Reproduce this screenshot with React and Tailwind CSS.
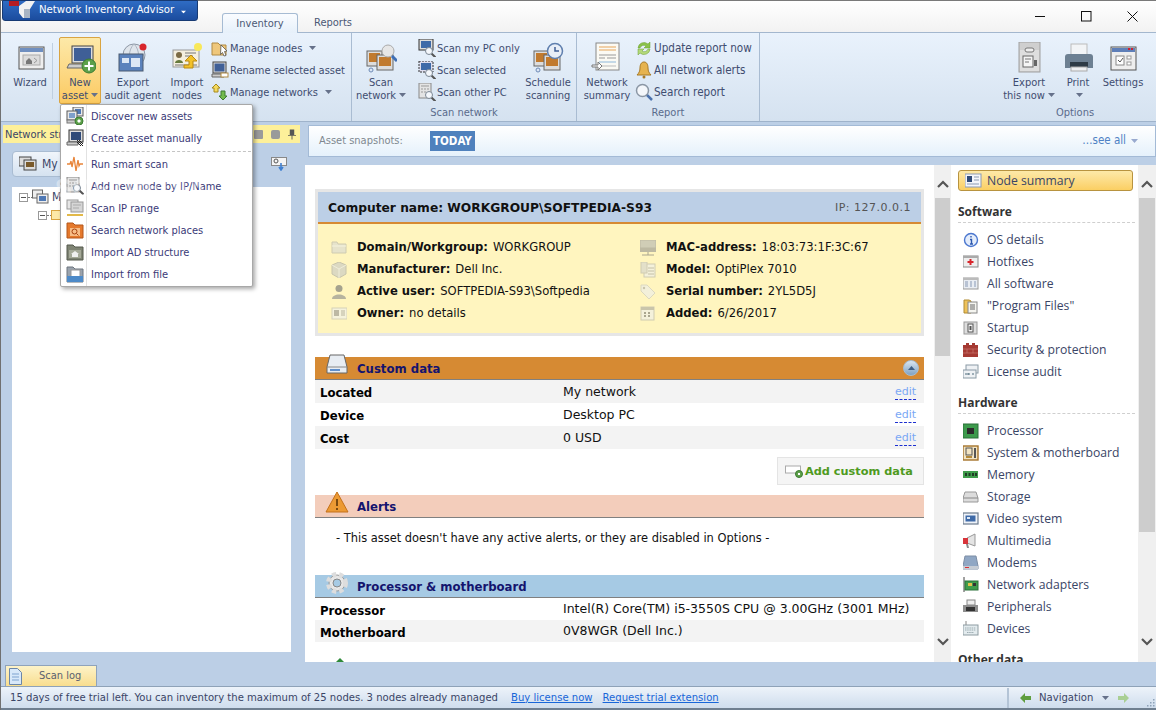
import React from 'react';

const ui = "font-['DejaVu_Sans_Condensed','Liberation_Sans',sans-serif]";
const web = "font-['DejaVu_Sans','Liberation_Sans',sans-serif]";

const Ic = ({ s = 16, children }) => (
    <svg width={s} height={s} viewBox={`0 0 ${s} ${s}`} className="shrink-0">{children}</svg>
);

const Caret = ({ className = '' }) => (
    <svg width="7" height="4" viewBox="0 0 7 4" className={`inline-block ${className}`}><path d="M0 0h7L3.5 4z" fill="#66718a" /></svg>
);

const Plus = ({ x, y, r = 6 }) => (
    <g>
        <circle cx={x} cy={y} r={r} fill="#5da04a" stroke="#3c7c32" />
        <path d={`M${x - r + 2.5} ${y}h${2 * r - 5}M${x} ${y - r + 2.5}v${2 * r - 5}`} stroke="#fff" strokeWidth="2" />
    </g>
);

const Pc = ({ x, y, w = 15, h = 12, fill = '#4f79b5' }) => (
    <g>
        <rect x={x} y={y} width={w} height={h} fill="#e9e9e9" stroke="#5a5a5a" />
        <rect x={x + 2} y={y + 2} width={w - 4} height={h - 4} fill={fill} />
    </g>
);

const Lens = ({ x, y, r = 4 }) => (
    <g>
        <path d={`M${x + r - 1} ${y + r - 1}l4 4`} stroke="#555" strokeWidth="2" />
        <circle cx={x} cy={y} r={r} fill="#f4f7fb" stroke="#7b8794" />
    </g>
);

// big ribbon icons
const big = {
    wizard: <Ic s={32}><rect x="5" y="5" width="25" height="22" fill="#eee" stroke="#555" /><rect x="6" y="6" width="23" height="4" fill="#6f8fc0" /><rect x="9" y="13" width="17" height="10" fill="#dcdcdc" stroke="#aaa" /><path d="M12 19l3-3 3 3v3h-6z" fill="#777" /><path d="M20 16l3 2.5-3 2.5" stroke="#999" fill="none" /></Ic>,
    newAsset: <Ic s={32}><rect x="8" y="4" width="21" height="17" fill="#ddd" stroke="#444" /><rect x="10" y="6" width="17" height="13" fill="#3f5f97" /><path d="M5 22h24l2 4H3z" fill="#ccc" stroke="#666" /><Plus x={25} y={24} r={7} /></Ic>,
    agent: <Ic s={32}><circle cx="17" cy="13" r="11" fill="#dfe5ec" stroke="#8d97a5" /><path d="M6 13h22M17 2c-6 6-6 16 0 22M17 2c6 6 6 16 0 22" stroke="#aab4c0" fill="none" /><rect x="2" y="12" width="24" height="17" fill="#5b82bc" stroke="#4a5a70" /><rect x="5" y="16" width="7" height="5" fill="#dce7f5" /><rect x="14" y="16" width="9" height="9" fill="#dce7f5" /><circle cx="26" cy="5" r="3.5" fill="#d8262c" /></Ic>,
    importN: <Ic s={32}><rect x="2" y="8" width="26" height="17" fill="#f5efdf" stroke="#999" /><circle cx="8" cy="13" r="3" fill="#7c6a44" /><path d="M4 21c0-4 8-4 8 0z" fill="#667a3c" /><path d="M14 11h11M14 14h8M4 23h22" stroke="#777" /><circle cx="27" cy="5" r="4" fill="#f8e85a" /><path d="M20 13l6 6h-4v7h-9v-3h5v-4h-4z" fill="#f3c128" stroke="#b98a13" /></Ic>,
    scan: <Ic s={32}><rect x="2" y="9" width="15" height="15" fill="#ddd" stroke="#666" /><rect x="4" y="11" width="11" height="9" fill="#c17a2e" /><rect x="12" y="13" width="16" height="15" fill="#ddd" stroke="#666" /><rect x="14" y="15" width="12" height="9" fill="#c17a2e" /><circle cx="23" cy="9" r="6" fill="#e6e6e6" stroke="#aaa" /><path d="M27 14l5 5" stroke="#3f6fb5" strokeWidth="3" /><circle cx="6" cy="28" r="2" fill="#dce7f5" stroke="#6d8ab5" /></Ic>,
    sched: <Ic s={32}><rect x="2" y="9" width="15" height="15" fill="#ddd" stroke="#666" /><rect x="4" y="11" width="11" height="9" fill="#c17a2e" /><rect x="12" y="13" width="16" height="15" fill="#ddd" stroke="#666" /><rect x="14" y="15" width="12" height="9" fill="#c17a2e" /><circle cx="23" cy="9" r="7.5" fill="#e8eef7" stroke="#5f7fae" strokeWidth="1.5" /><path d="M23 5v4h4" stroke="#3f5f97" fill="none" strokeWidth="1.5" /><circle cx="6" cy="28" r="2" fill="#dce7f5" stroke="#6d8ab5" /></Ic>,
    summary: <Ic s={32}><rect x="5" y="1" width="23" height="27" fill="#fbfaf4" stroke="#888" /><path d="M8 5h17M8 8h17" stroke="#e6a55b" /><path d="M8 13h17M8 16h6M16 16h9" stroke="#999" /><path d="M8 20h17" stroke="#8fb8da" /><path d="M8 24h17" stroke="#bbb" /><path d="M1 23h6v-3l4 4-4 4v-3H1z" fill="#fff" stroke="#777" /></Ic>,
    exportNow: <Ic s={32}><rect x="6" y="0" width="21" height="30" fill="#cfcfcf" stroke="#a0a0a0" /><rect x="7" y="8" width="19" height="21" fill="#dedede" /><rect x="12" y="6" width="9" height="4" rx="2" fill="#eee" stroke="#777" /><rect x="10" y="14" width="10" height="11" fill="#f5f5f5" stroke="#666" /><path d="M12 17h6M12 20h4" stroke="#777" /><rect x="21" y="18" width="3" height="6" fill="#666" /></Ic>,
    print: <Ic s={32}><rect x="9" y="2" width="16" height="11" fill="#f2f4f6" stroke="#bbb" /><path d="M3 15c0-2 1-3 3-3h22c2 0 3 1 3 3v11H3z" fill="#6d8092" /><rect x="8" y="20" width="18" height="5" fill="#2e3b46" /><rect x="9" y="25" width="16" height="4" fill="#eef0f2" stroke="#aaa" /></Ic>,
    settings: <Ic s={32}><rect x="4" y="5" width="25" height="23" fill="#eee" stroke="#555" /><rect x="5" y="6" width="23" height="4" fill="#5f7fb8" /><path d="M21 7h2M24 7h2" stroke="#c23" strokeWidth="2" /><rect x="9" y="14" width="8" height="9" fill="#fff" stroke="#888" /><path d="M11 18l2 2 3-4" stroke="#555" fill="none" /><rect x="20" y="14" width="4" height="3" fill="#fff" stroke="#999" /><rect x="20" y="20" width="4" height="3" fill="#fff" stroke="#999" /></Ic>,
};

// small ribbon icons
const small = {
    folder: <Ic s={18}><path d="M1 4h6l2 2h6v10H1z" fill="#efc77b" stroke="#b08a45" /><path d="M10 6l6 6-2.5.5 1.5 4-2 .5-1.5-3.5-2 2z" fill="#fff" stroke="#444" strokeWidth=".7" /></Ic>,
    rename: <Ic s={18}><rect x="2" y="1" width="13" height="11" fill="#ddd" stroke="#444" /><rect x="3.5" y="2.5" width="10" height="8" fill="#3f5f97" /><path d="M1 13h12v3H1z" fill="#ccc" stroke="#666" /><rect x="10" y="12" width="7" height="4" fill="#fff" stroke="#b08a45" /></Ic>,
    nets: <Ic s={18}><path d="M5 1l4 4H7v4H3V5H1z" fill="#f4d95e" stroke="#a68a1f" /><path d="M12 17l4-4h-2V8h-4v5H8z" fill="#72bb4e" stroke="#3c7c32" /></Ic>,
    myPc: <Ic s={18}><rect x="1" y="0" width="14" height="11" fill="#ddd" stroke="#333" /><rect x="3" y="2" width="10" height="7" fill="#3e6aa8" /><Lens x={11} y={12} r={3.5} /></Ic>,
    sel: <Ic s={18}><rect x="1" y="0" width="14" height="11" fill="#dde" stroke="#333" strokeDasharray="2 1" /><rect x="3" y="2" width="10" height="7" fill="#3e6aa8" /><Lens x={11} y={12} r={3.5} /></Ic>,
    other: <Ic s={18}><rect x="1" y="0" width="12" height="15" fill="#e4e4e4" stroke="#888" /><path d="M3 3h8M3 6h2M6 6h2M9 6h2M3 9h2M6 9h2" stroke="#999" /><Lens x={11} y={12} r={3.5} /></Ic>,
    update: <Ic s={18}><path d="M3 9a6 6 0 0 1 10-4l2-2v6h-6l2-2a4 4 0 0 0-6 2z" fill="#8bc34a" stroke="#6a9c30" strokeWidth=".5" /><path d="M15 10a6 6 0 0 1-10 4l-2 2v-6h6l-2 2a4 4 0 0 0 6-2z" fill="#b4d97a" stroke="#6a9c30" strokeWidth=".5" /></Ic>,
    bell: <Ic s={18}><path d="M9 1c3 0 4 3 4 6s1 5 3 7H2c2-2 3-4 3-7s1-6 4-6z" fill="#e6b34f" stroke="#a87a26" /><circle cx="9" cy="16" r="1.5" fill="#a87a26" /></Ic>,
    find: <Ic s={18}><path d="M11 11l6 6" stroke="#4c72ad" strokeWidth="2.5" /><circle cx="7.5" cy="7.5" r="6" fill="#f4f7fb" stroke="#8b97a5" strokeWidth="1.5" /></Ic>,
};

// context menu icons
const menuIc = {
    discover: <Ic s={18}><Pc x={7} y={0} w={10} h={9} /><Pc x={1} y={4} w={10} h={9} fill="#7fa0cc" /><rect x="1" y="13" width="10" height="3" fill="#ccc" stroke="#777" /><Plus x={13} y={14} r={4} /></Ic>,
    create: <Ic s={18}><rect x="3" y="1" width="14" height="12" fill="#ddd" stroke="#333" /><rect x="5" y="3" width="10" height="8" fill="#2f4a78" /><path d="M1 13h11v3H1z" fill="#ccc" stroke="#666" /><path d="M11 11l6 6M13 11l4 4M11 13l4 4" stroke="#222" /></Ic>,
    smart: <Ic s={18}><path d="M1 9h3l1-3 1 6 2-10 2 14 2-11 1 6 1-2h3" stroke="#e8853a" fill="none" strokeWidth="1.3" /></Ic>,
    add: <Ic s={18}><rect x="1" y="0" width="12" height="15" fill="#e4e4e4" stroke="#888" /><path d="M3 3h8M3 6h2M6 6h2M9 6h2M3 9h2M6 9h2" stroke="#999" /><Lens x={11} y={11} r={3.5} /></Ic>,
    range: <Ic s={18}><rect x="1" y="1" width="11" height="9" fill="#e6e6e6" stroke="#999" /><rect x="5" y="3" width="12" height="10" fill="#d6d6d6" stroke="#999" /><path d="M7 6h8M7 9h6" stroke="#aaa" /><path d="M1 16h16" stroke="#e2b94a" strokeWidth="2" /></Ic>,
    places: <Ic s={18}><path d="M1 2h6l2 2h8v13H1z" fill="#e5792c" stroke="#b3561a" /><rect x="4" y="7" width="10" height="8" fill="#f7bd86" /><circle cx="8.5" cy="10.5" r="2.5" fill="none" stroke="#a8420f" /><path d="M10.5 12.5l2 2" stroke="#a8420f" /></Ic>,
    ad: <Ic s={18}><path d="M1 2h6l2 2h8v13H1z" fill="#7f8474" stroke="#55594c" /><path d="M3 7h12v8H3z" fill="#a5a998" /><path d="M9 8l4 3h-1v3H6v-3H5z" fill="#f0f0f0" /></Ic>,
    file: <Ic s={18}><path d="M1 2h6l2 2h8v13H1z" fill="#9aa3ad" stroke="#6c757e" /><rect x="5" y="5" width="9" height="7" fill="#fff" stroke="#999" /><path d="M1 11h16v6H1z" fill="#4d8ac8" /></Ic>,
};

// grey icons in the summary card
const info = {
    folder: <Ic><path d="M1 2h5l1 2h8v9H1z" fill="#e6e3cb" stroke="#cfcbb0" /><path d="M1 6h14" stroke="#f5f3de" /></Ic>,
    box: <Ic><path d="M8 0l7 3v9l-7 4-7-4V3z" fill="#dcd9c2" stroke="#c8c4ab" /><path d="M1 3l7 4 7-4M8 7v9" stroke="#efedd9" fill="none" /></Ic>,
    user: <Ic><circle cx="8" cy="4.5" r="3.5" fill="#a5a28e" /><path d="M1 15c0-6 14-6 14 0z" fill="#b6b39e" /></Ic>,
    card: <Ic><rect x="1" y="2" width="15" height="11" fill="#f5f2dc" stroke="#d6d2b8" /><rect x="3" y="4" width="5" height="6" fill="#bdb9a4" /><path d="M10 5h4M10 7h4M10 9h4" stroke="#b8b49e" /></Ic>,
    mac: <Ic><rect x="0" y="0" width="16" height="8" fill="#d0cdb6" stroke="#bdb9a2" /><rect x="0" y="8" width="16" height="4" fill="#bdb9a2" /><path d="M8 12v3M2 15h12" stroke="#aaa68f" /></Ic>,
    model: <Ic><rect x="4" y="2" width="11" height="13" fill="#f4f1db" stroke="#d0ccb2" /><rect x="1" y="0" width="6" height="11" fill="#e3e0c9" stroke="#d0ccb2" /><path d="M8 6h6M8 9h6M8 12h6" stroke="#c4c0a6" /></Ic>,
    tag: <Ic><path d="M1 1h6l8 8-6 6-8-8z" fill="#f3f0da" stroke="#dcd8bf" /><circle cx="4" cy="4" r="1.2" fill="#c8c4ab" /></Ic>,
    cal: <Ic><rect x="1" y="1" width="13" height="13" fill="#f4f1db" stroke="#cfcbb1" /><rect x="1" y="1" width="13" height="3" fill="#c9c5ab" /><path d="M4 7h2M8 7h2M4 10h2M8 10h2" stroke="#aaa68f" strokeWidth="2" /></Ic>,
};

const nav = {
    summary: <Ic s={18}><rect x="0" y="2" width="16" height="13" fill="#f4f6fb" stroke="#8b9ab3" /><rect x="2" y="4" width="5" height="6" fill="#2f4a78" /><path d="M9 5h5M9 8h5M2 12h12" stroke="#8b9ab3" /></Ic>,
    os: <Ic><circle cx="8" cy="8" r="6.5" fill="#e4edfb" stroke="#4b77cf" strokeWidth="1.4" /><path d="M8 4v1.5M7 7.5h1.5V12M7 12h3" stroke="#2e59ae" strokeWidth="1.4" fill="none" /></Ic>,
    hot: <Ic><rect x="0" y="2" width="15" height="11" fill="#eee" stroke="#888" /><rect x="0" y="2" width="15" height="2" fill="#aaa" /><path d="M7.5 5v6M4.5 8h6" stroke="#d8262c" strokeWidth="2" /></Ic>,
    soft: <Ic><rect x="0" y="2" width="15" height="11" fill="#e9edf3" stroke="#999" /><rect x="0" y="2" width="15" height="2" fill="#bbb" /><path d="M2 6h3M2 8h3M2 10h3M7 6h2M7 8h2M7 10h2M11 6h2M11 8h2M11 10h2" stroke="#8899b5" /></Ic>,
    prog: <Ic><path d="M1 2h5l2 1v12H1z" fill="#eec25a" stroke="#b08a30" /><rect x="5" y="4" width="9" height="11" fill="#f5f5f0" stroke="#888" /><path d="M7 7h5M7 9h5M7 11h5" stroke="#666" /></Ic>,
    startup: <Ic><rect x="1" y="2" width="13" height="12" fill="#ddd" stroke="#999" /><rect x="5" y="4" width="5" height="8" fill="#f4f4f4" stroke="#555" /><rect x="6.5" y="6" width="2" height="4" fill="#555" /></Ic>,
    sec: <Ic><path d="M0 3h3V1h3v2h3V1h3v2h3v12H0z" fill="#a53a33" /><path d="M0 7h15M0 11h15M4 7v4M10 7v4" stroke="#c9776f" strokeWidth=".7" /></Ic>,
    lic: <Ic><rect x="3" y="1" width="12" height="8" fill="#eef1f4" stroke="#8a9aa5" /><rect x="0" y="6" width="13" height="8" fill="#eef1f4" stroke="#8a9aa5" /><path d="M2 10h4M6 9v2M9 10h2" stroke="#4d6b7a" /></Ic>,
    cpu: <Ic><rect x="0" y="1" width="15" height="14" fill="#3d9a4c" stroke="#2a7038" /><rect x="4" y="5" width="7" height="6" fill="#2b2b2b" /></Ic>,
    board: <Ic><rect x="0" y="1" width="15" height="14" fill="#f2e4c3" stroke="#a5742c" strokeWidth="1.4" /><rect x="3" y="3" width="6" height="7" fill="none" stroke="#555" /><rect x="11" y="3" width="2" height="10" fill="#555" /><path d="M3 12h6" stroke="#b48a3a" strokeWidth="2" /></Ic>,
    mem: <Ic><rect x="0" y="4" width="15" height="7" fill="#3f9c4b" /><path d="M2 6h2v3H2zM5.5 6h2v3h-2zM9 6h2v3H9zM12 6h2v3h-2z" fill="#1f3d25" /></Ic>,
    store: <Ic><path d="M2 3h11l2 6v4H0V9z" fill="#dcdcdc" stroke="#999" /><path d="M0 9h15" stroke="#888" /></Ic>,
    video: <Ic><rect x="0" y="2" width="15" height="11" fill="#eef2f8" stroke="#6b7b8e" strokeWidth="1.2" /><rect x="2.5" y="4.5" width="10" height="6" fill="#3e6aa8" /><rect x="4" y="6" width="3" height="2" fill="#dce7f5" /></Ic>,
    multi: <Ic><path d="M4 5l8-4v12l-8-3z" fill="#e4e4e4" stroke="#999" /><rect x="0" y="5" width="5" height="6" fill="#d8343a" /><path d="M3 11l1 4h2l-1-4z" fill="#888" /></Ic>,
    modem: <Ic><path d="M2 1h11l2 10v3H0v-3z" fill="#90a7c4" stroke="#7d8ea5" /><path d="M0 11h15v3H0z" fill="#c6ccd4" /><path d="M2 12.5h4" stroke="#d8343a" /></Ic>,
    adapter: <Ic><path d="M1 0v15" stroke="#444" /><rect x="2" y="4" width="13" height="9" fill="#3f9c4b" stroke="#2a7038" /><rect x="5" y="6" width="4" height="3" fill="#e2c14c" /><rect x="10" y="6" width="3" height="3" fill="#333" /></Ic>,
    peri: <Ic><rect x="4" y="1" width="8" height="5" fill="#eee" stroke="#888" /><path d="M0 6h15v7H0z" fill="#8e8e8e" /><rect x="3" y="8" width="9" height="4" fill="#333" /></Ic>,
    dev: <Ic><path d="M3 0v4" stroke="#888" /><rect x="0" y="4" width="15" height="10" fill="#e3ebee" stroke="#8d9ba1" /><path d="M2 7h11M2 9h11M4 11.5h7" stroke="#9cabb1" strokeDasharray="1.5 .7" /></Ic>,
};

const softwareItems = [
    ['OS details', nav.os], ['Hotfixes', nav.hot], ['All software', nav.soft], ['"Program Files"', nav.prog],
    ['Startup', nav.startup], ['Security & protection', nav.sec], ['License audit', nav.lic],
];

const hardwareItems = [
    ['Processor', nav.cpu], ['System & motherboard', nav.board], ['Memory', nav.mem], ['Storage', nav.store],
    ['Video system', nav.video], ['Multimedia', nav.multi], ['Modems', nav.modem], ['Network adapters', nav.adapter],
    ['Peripherals', nav.peri], ['Devices', nav.dev],
];

const menuItems = [
    ['Discover new assets', menuIc.discover], ['Create asset manually', menuIc.create], null,
    ['Run smart scan', menuIc.smart], ['Add new node by IP/Name', menuIc.add], ['Scan IP range', menuIc.range],
    ['Search network places', menuIc.places], ['Import AD structure', menuIc.ad], ['Import from file', menuIc.file],
];

const BigBtn = ({ icon, lines, caret, width, active, className = '' }) => (
    <div className={`${width} ${className} h-[67px] flex flex-col items-center shrink-0 ${active ? 'bg-gradient-to-b from-[#fde9a8] to-[#fbc95f] border border-[#d9a441] rounded-[2px]' : ''}`}>
        <div className={`${active ? 'h-[38px] pt-[4px]' : 'h-[39px] pt-[5px]'} flex justify-center`}>{icon}</div>
        <div className="text-center leading-[13px] whitespace-nowrap">
            <div>{lines[0]}</div>
            <div className="h-[13px]">{lines[1]}{caret && <Caret className="ml-[3px] mb-[2px]" />}</div>
        </div>
    </div>
);

const SmallCol = ({ items, className = '' }) => (
    <div className={`flex flex-col shrink-0 ${className}`}>
        {items.map(([label, icon, caret]) => (
            <div key={label} className="h-[22px] flex items-center gap-[1px] whitespace-nowrap">
                {icon}<span className="pt-[2px]">{label}</span>{caret && <Caret className="ml-[6px]" />}
            </div>
        ))}
    </div>
);

const GroupLabel = ({ children }) => (
    <div className="h-[16px] leading-[15px] text-center text-[#5a6b8c]">{children}</div>
);

const Chevron = ({ up }) => (
    <svg width="12" height="8" viewBox="0 0 12 8">
        <path d={up ? 'M1 7l5-5 5 5' : 'M1 1l5 5 5-5'} fill="none" stroke="#555" strokeWidth="2.2" />
    </svg>
);

const Scrollbar = ({ width, thumb }) => (
    <div className={`${width} h-full bg-[#f0f0f0] shrink-0 flex flex-col relative`}>
        <div className="h-[33px] flex items-center justify-center pt-[4px]"><Chevron up /></div>
        <div className={`${thumb} mx-[1px] bg-[#cdcdcd]`} />
        <div className="absolute bottom-[16px] left-0 right-0 flex justify-center"><Chevron /></div>
    </div>
);

const InfoRow = ({ icon, label, value }) => (
    <div className="h-[22px] flex items-center whitespace-nowrap">
        <div className="w-[26px] shrink-0">{icon}</div>
        <b>{label}</b><span className="ml-[5px]">{value}</span>
    </div>
);

const SectionHead = ({ icon, title, bg, children }) => (
    <div className={`h-[23px] ${bg} border-b border-b-[#808080] flex items-center relative pl-[42px] pt-[2px] text-[13px] font-bold text-[#14146e] ${ui}`}>
        <div className="absolute left-[10px] -top-[4px]">{icon}</div>
        {title}
        {children}
    </div>
);

const DataRow = ({ label, value, shade, edit, h = 'h-[23px]' }) => (
    <div className={`${h} ${shade ? 'bg-[#f3f3f3]' : ''} flex items-center pl-[5px] pr-[8px] pt-[1px] text-[12.5px] text-[#111]`}>
        <b className={`w-[243px] shrink-0 pt-[2px] text-black text-[13px] ${ui}`}>{label}</b>
        <span className="flex-1 whitespace-nowrap">{value}</span>
        {edit && <span className="text-[11px] leading-[14px] text-[#7aa7f5] border-b border-dashed border-[#1c2fd0]">edit</span>}
    </div>
);

const NavHead = ({ children, className = '' }) => (
    <div className={`${className} h-[22px] leading-[22px] font-bold text-[#333] text-[12px] border-b border-dashed border-[#cfcfcf]`}>{children}</div>
);

const NavItem = ({ label, icon }) => (
    <div className="h-[22px] flex items-center pl-[5px] gap-[9px] text-[12.2px] text-[#3a4566] whitespace-nowrap">
        <div className="w-[15px] shrink-0">{icon}</div>{label}
    </div>
);

export default function App() {
    return (
        <div className={`w-[1156px] h-[710px] overflow-hidden relative bg-[#bccfe6] flex flex-col text-[11px] ${ui} border-l border-l-[#707070]`}>
            {/* title bar */}
            <div className="h-[32px] shrink-0 border-t border-t-[#7a7a7a] bg-gradient-to-b from-[#ffffff] to-[#f2f2f2] flex relative">
                <div className="w-[196px] h-[21px] ml-[1px] -mt-[1px] rounded-b-[3px] bg-gradient-to-b from-[#2f6cc4] to-[#1b4c9e] border border-[#173a73] flex items-center text-white relative">
                    <svg width="28" height="18" viewBox="0 0 28 18" className="absolute left-[5px] top-0">
                        <rect x="1" y="0" width="10" height="5" fill="#b31d24" />
                        <path d="M11 5l7-5h9l-5 8v9h-7l-4-5z" fill="#f2f2f2" />
                        <path d="M16 8h6v9h-6z" fill="#a8b4c4" />
                    </svg>
                    <span className="ml-[36px] text-[11.3px]">Network Inventory Advisor</span>
                    <Caret className="ml-[6px] mt-[2px] scale-75 brightness-[4]" />
                </div>
                <div className="ml-[24px] mt-[12px] w-[76px] h-[20px] bg-gradient-to-b from-[#fafcff] to-[#e6f0fa] border border-[#a6bbd3] border-b-0 rounded-t-[3px] text-center leading-[19px] text-[#4b5875]">Inventory</div>
                <div className="ml-[16px] mt-[12px] h-[20px] leading-[19px] text-[#4b5875]">Reports</div>
                <div className="ml-auto mr-px flex items-start">
                    <div className="w-[46px] h-[30px] flex items-center justify-center"><svg width="11" height="11"><path d="M0 5.5h10" stroke="#111" /></svg></div>
                    <div className="w-[46px] h-[30px] flex items-center justify-center"><svg width="11" height="11"><rect x=".5" y=".5" width="9.5" height="9.5" fill="none" stroke="#111" /></svg></div>
                    <div className="w-[46px] h-[30px] flex items-center justify-center"><svg width="11" height="11"><path d="M.5.5l10 10M10.5.5l-10 10" stroke="#111" /></svg></div>
                </div>
            </div>

            {/* ribbon */}
            <div className="h-[90px] shrink-0 bg-gradient-to-b from-[#e9f2fc] to-[#d5e2f0] border-t border-t-[#a3b7ce] border-b border-b-[#9fb3cb] flex text-[#3f4d70]">
                <div className="w-[351px] shrink-0 border-r border-r-[#a9bcd2] flex flex-col">
                    <div className="h-[72px] pt-[4px] flex">
                        <BigBtn icon={big.wizard} lines={['Wizard', '']} width="w-[44px]" className="ml-[7px]" />
                        <div className="w-px h-[56px] mt-[6px] bg-[#bfcfe0]" />
                        <BigBtn icon={big.newAsset} lines={['New', 'asset']} caret active width="w-[42px]" className="ml-[6px]" />
                        <BigBtn icon={big.agent} lines={['Export', 'audit agent']} width="w-[58px]" className="ml-[3px]" />
                        <BigBtn icon={big.importN} lines={['Import', 'nodes']} width="w-[46px]" className="ml-[2px]" />
                        <SmallCol className="ml-px" items={[['Manage nodes', small.folder, true], ['Rename selected asset', small.rename], ['Manage networks', small.nets, true]]} />
                    </div>
                </div>
                <div className="w-[225px] shrink-0 border-r border-r-[#a9bcd2] flex flex-col">
                    <div className="h-[72px] pt-[4px] flex">
                        <BigBtn icon={big.scan} lines={['Scan', 'network']} caret width="w-[56px]" className="ml-[1px]" />
                        <SmallCol className="ml-[9px] w-[101px]" items={[['Scan my PC only', small.myPc], ['Scan selected', small.sel], ['Scan other PC', small.other]]} />
                        <BigBtn icon={big.sched} lines={['Schedule', 'scanning']} width="w-[58px]" />
                    </div>
                    <GroupLabel>Scan network</GroupLabel>
                </div>
                <div className="w-[183px] shrink-0 border-r border-r-[#a9bcd2] flex flex-col">
                    <div className="h-[72px] pt-[4px] flex">
                        <BigBtn icon={big.summary} lines={['Network', 'summary']} width="w-[52px]" className="ml-[4px]" />
                        <SmallCol className="ml-[2px] text-[11.6px]" items={[['Update report now', small.update], ['All network alerts', small.bell], ['Search report', small.find]]} />
                    </div>
                    <GroupLabel>Report</GroupLabel>
                </div>
                <div className="flex-1 flex justify-end">
                    <div className="w-[154px] mr-[4px] flex flex-col">
                        <div className="h-[72px] pt-[4px] flex">
                            <BigBtn icon={big.exportNow} lines={['Export', 'this now']} caret width="w-[62px]" />
                            <BigBtn icon={big.print} lines={['Print', '']} caret width="w-[36px]" />
                            <BigBtn icon={big.settings} lines={['Settings', '']} width="w-[54px]" />
                        </div>
                        <GroupLabel>Options</GroupLabel>
                    </div>
                </div>
            </div>

            {/* main */}
            <div className="h-[540px] shrink-0 flex">
                <div className="w-[304px] shrink-0 flex flex-col pt-[3px]">
                    <div className="ml-[2px] w-[297px] h-[18px] bg-[#fdf09a] flex items-center pl-[2px] pr-[4px] text-[#3a4566] relative">
                        <span className="pt-[3px]">Network structure</span>
                        <div className="ml-auto flex items-center gap-[8px]">
                            <span className="w-[9px] h-[9px] bg-[#9a9a9a] rounded-[1px]" />
                            <span className="w-[9px] h-[9px] bg-[#9a9a9a] rounded-[2px]" />
                            <svg width="8" height="11" viewBox="0 0 9 11"><path d="M2 0h5v6h2v1H5v4H4V7H0V6h2z" fill="#555" /></svg>
                        </div>
                    </div>
                    <div className="ml-[11px] mt-[8px] h-[26px] w-[275px] flex items-center">
                        <div className="h-[26px] w-[240px] border border-[#a9bcd2] rounded-[4px] bg-gradient-to-b from-[#f0f5fb] to-[#d5e2f0] flex items-center pl-[6px] gap-[5px] text-[#3a4566]">
                            <svg width="18" height="16" viewBox="0 0 18 16"><rect x="0" y="1" width="12" height="9" fill="#ddd" stroke="#444" /><rect x="5" y="4" width="12" height="10" fill="#ddd" stroke="#444" /><rect x="7" y="6" width="8" height="5" fill="#7a5a2a" /></svg>
                            <span className="text-[12px]">My network</span>
                        </div>
                        <svg width="16" height="14" viewBox="0 0 16 14" className="ml-auto"><rect x=".5" y=".5" width="15" height="8" fill="#f4f4f4" stroke="#888" /><circle cx="5" cy="4" r="2" fill="none" stroke="#555" /><path d="M10 6v6M8 10l2 3 2-3" stroke="#3f7fd0" strokeWidth="1.6" fill="none" /></svg>
                    </div>
                    <div className="ml-[11px] mt-[10px] w-[279px] h-[465px] bg-white pl-[7px] pt-px">
                        <div className="flex items-center h-[18px] text-[#3a4566] text-[12px]">
                            <span className="w-[9px] h-[9px] border border-[#999] flex items-center justify-center"><span className="w-[5px] h-px bg-[#555]" /></span>
                            <span className="w-[4px] border-t border-dotted border-[#777]" />
                            <svg width="17" height="17" viewBox="0 0 17 17"><rect x=".5" y="1" width="10" height="8" fill="#eee" stroke="#666" /><rect x="5" y="5" width="11" height="9" fill="#eee" stroke="#666" /><rect x="7" y="7" width="7" height="5" fill="#4f79b5" /></svg>
                            <span className="ml-[3px]">My network</span>
                        </div>
                        <div className="flex items-center h-[14px] mt-[2px] ml-[19px]">
                            <span className="w-[9px] h-[9px] border border-[#999] flex items-center justify-center"><span className="w-[5px] h-px bg-[#555]" /></span>
                            <span className="w-[4px] border-t border-dotted border-[#777]" />
                            <span className="w-[10px] h-[10px] bg-[#fde9a8] border border-[#d9a441]" />
                        </div>
                    </div>
                </div>

                <div className="flex-1 min-w-0 flex flex-col pt-[3px]">
                    <div className="ml-[3px] h-[32px] shrink-0 bg-gradient-to-b from-[#ffffff] to-[#e5f1fb] border border-[#a3bad6] flex items-center pl-[10px] pr-[17px]">
                        <span className="w-[111px] text-[#808890]">Asset snapshots:</span>
                        <span className="h-[20px] px-[3px] leading-[20px] bg-[#4f81bd] text-white font-bold text-[11.5px]">TODAY</span>
                        <span className="ml-auto text-[#4f81c4] text-[11.5px]">…see all</span>
                        <Caret className="ml-[5px] brightness-150" />
                    </div>
                    <div className="mt-[8px] h-[497px] flex">
                        {/* report panel */}
                        <div className={`w-[629px] shrink-0 bg-white overflow-hidden px-[10px] pt-[24px] ${web}`}>
                            <div className="border-[3px] border-[#e6e6e6] bg-[#fff5bf] h-[147px]">
                                <div className="h-[32px] bg-[#bccfe6] border-b-2 border-b-[#d68a33] flex items-center justify-between pt-[2px] pl-[10px] pr-[10px]">
                                    <b className="text-[12.25px] text-[#111]">Computer name: WORKGROUP\SOFTPEDIA-S93</b>
                                    <span className="text-[11px] text-[#555] tracking-[0.5px]">IP: 127.0.0.1</span>
                                </div>
                                <div className="flex pt-[13px] text-[11.6px] text-[#111]">
                                    <div className="w-[322px] pl-[13px]">
                                        <InfoRow icon={info.folder} label="Domain/Workgroup:" value="WORKGROUP" />
                                        <InfoRow icon={info.box} label="Manufacturer:" value="Dell Inc." />
                                        <InfoRow icon={info.user} label="Active user:" value="SOFTPEDIA-S93\Softpedia" />
                                        <InfoRow icon={info.card} label="Owner:" value="no details" />
                                    </div>
                                    <div>
                                        <InfoRow icon={info.mac} label="MAC-address:" value="18:03:73:1F:3C:67" />
                                        <InfoRow icon={info.model} label="Model:" value="OptiPlex 7010" />
                                        <InfoRow icon={info.tag} label="Serial number:" value="2YL5D5J" />
                                        <InfoRow icon={info.cal} label="Added:" value="6/26/2017" />
                                    </div>
                                </div>
                            </div>

                            <div className="mt-[21px]">
                                <SectionHead bg="bg-[#d68a33]" title="Custom data" icon={
                                    <Ic s={24}><path d="M5 2h14l3 12v6H2v-6z" fill="#e8edf3" stroke="#666" /><path d="M2 14h20" stroke="#888" /><rect x="5" y="16" width="10" height="2" fill="#5f8fcc" /></Ic>
                                }>
                                    <span className="absolute right-[5px] top-[3px] w-[16px] h-[16px] rounded-full bg-gradient-to-b from-[#d9e6f2] to-[#7fa2c4] border border-[#a8bdd0] flex items-center justify-center">
                                        <svg width="7" height="4" viewBox="0 0 7 4"><path d="M0 4h7L3.5 0z" fill="#3f5f85" /></svg>
                                    </span>
                                </SectionHead>
                                <DataRow label="Located" value="My network" shade edit />
                                <DataRow label="Device" value="Desktop PC" edit />
                                <DataRow label="Cost" value="0 USD" shade edit />
                            </div>
                            <div className="mt-[8px] flex justify-end">
                                <div className="w-[147px] h-[28px] bg-[#f5f5f5] border border-[#e4e4e4] flex items-center pl-[7px] pt-[2px] text-[11.3px] font-bold text-[#4f9a1e] whitespace-nowrap">
                                    <svg width="20" height="14" viewBox="0 0 20 14" className="shrink-0"><rect x=".5" y="1" width="15" height="7" fill="#fff" stroke="#aaa" /><Plus x={14} y={9} r={3.5} /></svg>
                                    Add custom data
                                </div>
                            </div>
                            <div className="mt-[10px]">
                                <SectionHead bg="bg-[#f3cdbb]" title="Alerts" icon={
                                    <Ic s={24}><path d="M12 1l11 20H1z" fill="#ec9a34" stroke="#c4711a" /><path d="M12 8v7M12 17v2" stroke="#7a4a10" strokeWidth="2" /></Ic>
                                } />
                            </div>
                            <div className="h-[57px] pl-[21px] pt-[12px] text-[11.45px] leading-[16px] text-[#111] whitespace-nowrap">- This asset doesn't have any active alerts, or they are disabled in Options -</div>
                            <SectionHead bg="bg-[#a6cae4]" title="Processor & motherboard" icon={
                                <Ic s={24}><circle cx="12" cy="12" r="8" fill="#e8e8e8" stroke="#999" strokeWidth="1" /><circle cx="12" cy="12" r="8.5" fill="none" stroke="#ddd" strokeWidth="5" strokeDasharray="4 3" /><circle cx="12" cy="12" r="4" fill="#a6cae4" stroke="#888" /></Ic>
                            } />
                            <DataRow h="h-[22px]" label="Processor" value="Intel(R) Core(TM) i5-3550S CPU @ 3.00GHz (3001 MHz)" />
                            <DataRow h="h-[22px]" label="Motherboard" value="0V8WGR (Dell Inc.)" shade />
                            <div className="mt-[16px] ml-[19px] w-0 h-0 border-x-[6px] border-x-transparent border-b-[6px] border-b-[#2f8a3a]" />
                        </div>

                        <Scrollbar width="w-[17px]" thumb="h-[158px]" />

                        {/* navigation panel */}
                        <div className="w-[187px] shrink-0 bg-white overflow-hidden px-[7px] pt-[5px] font-['Open_Sans',sans-serif]">
                            <div className="w-[175px] h-[21px] rounded-[3px] border border-[#b8933f] bg-gradient-to-b from-[#fde9a8] to-[#fbcf62] flex items-center pl-[6px] pt-[1px] gap-[4px] text-[12.2px] text-[#3a4566]">
                                {nav.summary}Node summary
                            </div>
                            <NavHead className="w-[177px] mt-[10px] mb-[6px]">Software</NavHead>
                            {softwareItems.map(([l, ic]) => <NavItem key={l} label={l} icon={ic} />)}
                            <NavHead className="w-[177px] mt-[9px] mb-[6px]">Hardware</NavHead>
                            {hardwareItems.map(([l, ic]) => <NavItem key={l} label={l} icon={ic} />)}
                            <div className="mt-[9px] h-[22px] leading-[22px] font-bold text-[#333] text-[12px]">Other data</div>
                        </div>

                        <Scrollbar width="w-[18px]" thumb="h-[334px]" />
                    </div>
                </div>
            </div>

            {/* bottom tabs */}
            <div className="h-[24px] shrink-0 pt-[3px] pl-[4px]">
                <div className="w-[92px] h-[21px] bg-gradient-to-b from-[#fdf3c8] to-[#f8dd8e] border border-[#8fa3bb] border-b-0 flex items-center pl-[3px] text-[#5a5f70]">
                    <svg width="13" height="17" viewBox="0 0 13 17" className="shrink-0"><path d="M.5.5h8l4 4v12H.5z" fill="#d8e8fa" stroke="#6b86a8" /><path d="M3 6h7M3 9h7M3 12h7" stroke="#7ea3d0" /></svg>
                    <span className="ml-[17px]">Scan log</span>
                </div>
            </div>

            {/* status bar */}
            <div className="h-[24px] shrink-0 bg-gradient-to-b from-[#edf3fa] to-[#cfdded] border-t border-t-[#8ea2b8] border-b-2 border-b-[#6f7f90] flex items-center pl-[9px] pt-[1px] text-[#3a4566] text-[11.2px] whitespace-nowrap relative">
                <span>15 days of free trial left. You can inventory the maximum of 25 nodes. 3 nodes already managed</span>
                <a className="ml-[13px] text-[#1866d8] underline">Buy license now</a>
                <a className="ml-[10px] text-[#1866d8] underline">Request trial extension</a>
                <div className="ml-auto h-full w-[149px] border-l-2 border-l-[#b4c4d6] flex items-center pl-[11px] relative">
                    <svg width="11" height="10" viewBox="0 0 11 10"><path d="M0 5l5-5v3h6v4H5v3z" fill="#5f9e3f" /></svg>
                    <span className="ml-[8px]">Navigation</span>
                    <Caret className="ml-[9px]" />
                    <svg width="11" height="10" viewBox="0 0 11 10" className="ml-[9px]"><path d="M11 5L6 0v3H0v4h6v3z" fill="#a9cf94" /></svg>
                    <svg width="10" height="10" viewBox="0 0 10 10" className="absolute right-[1px] bottom-0"><path d="M8 1h1.500v1.500H8zM5 4h1.500v1.500H5zM8 4h1.500v1.500H8zM2 7h1.500v1.500H2zM5 7h1.500v1.500H5zM8 7h1.500v1.500H8z" fill="#8ea2b8" /></svg>
                </div>
            </div>

            {/* new asset menu */}
            <div className="absolute left-[59px] top-[104px] w-[193px] h-[183px] bg-white border border-[#a8a8a8] rounded-[2px] shadow-[2px_2px_4px_rgba(0,0,0,0.35)] text-[#3a3a78]">
                <div className="absolute left-[25px] top-0 bottom-0 w-px bg-[#e2e2e2]" />
                {menuItems.map((m, i) => m ? (
                    <div key={m[0]} className="h-[22px] flex items-center pl-[5px] whitespace-nowrap">
                        <div className="w-[25px] shrink-0">{m[1]}</div><span className="pt-[2px]">{m[0]}</span>
                    </div>
                ) : (
                    <div key={i} className="h-[4px] ml-[30px] mr-[1px] flex items-center"><div className="w-full border-t border-dashed border-[#c4c4c4]" /></div>
                ))}
            </div>

            {/* watermark */}
            <div className="absolute left-[54px] top-[174px] text-[25px] leading-[28px] font-bold tracking-[1px] text-white/40 pointer-events-none font-['Liberation_Sans',sans-serif]">SOFTPEDIA</div>
        </div>
    );
}
